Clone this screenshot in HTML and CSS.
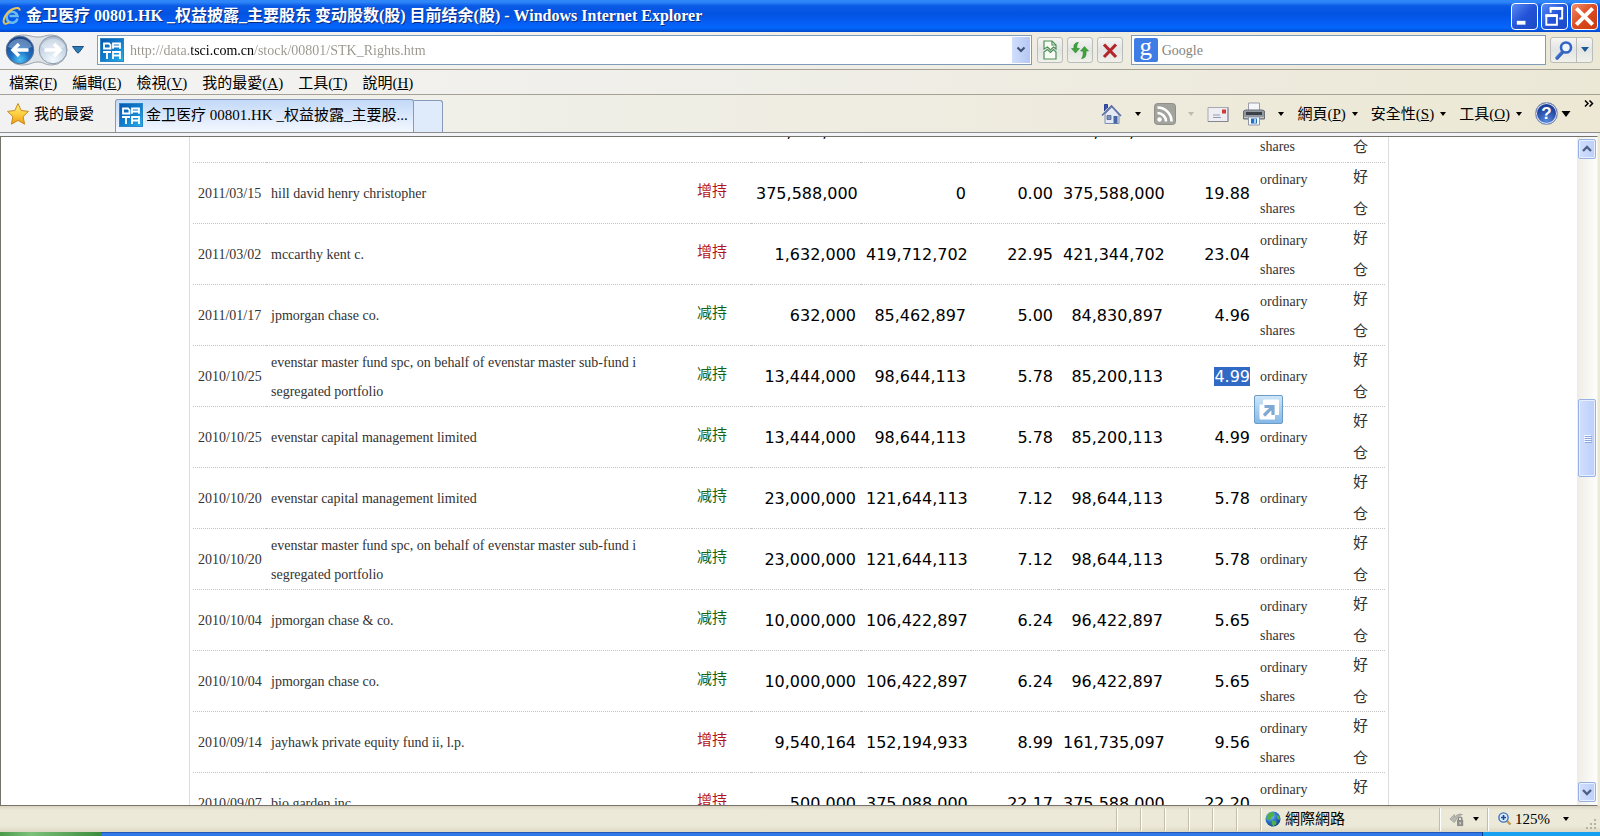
FILE: index.html
```html
<!DOCTYPE html>
<html lang="zh-Hant">
<head>
<meta charset="utf-8">
<title>金卫医疗 00801.HK _权益披露_主要股东 变动股数(股) 目前结余(股)</title>
<link rel="stylesheet" href="styles.css">
</head>
<body>
<svg class="defs" aria-hidden="true">
  <defs>
    <linearGradient id="favBg" x1="0" y1="0" x2="1" y2="1"><stop offset="0" stop-color="#0a57ac"/><stop offset=".55" stop-color="#1180cf"/><stop offset="1" stop-color="#25b4ea"/></linearGradient>
    <radialGradient id="backBg" cx=".5" cy=".85" r=".85"><stop offset="0" stop-color="#4fc4f5"/><stop offset=".4" stop-color="#1f6fc4"/><stop offset="1" stop-color="#173f84"/></radialGradient>
    <radialGradient id="fwdBg" cx=".5" cy=".85" r=".85"><stop offset="0" stop-color="#f4f9fd"/><stop offset=".6" stop-color="#c9d8e8"/><stop offset="1" stop-color="#a9b9cd"/></radialGradient>
    <linearGradient id="starBg" x1="0" y1="0" x2="0" y2="1"><stop offset="0" stop-color="#fff08a"/><stop offset=".5" stop-color="#fcd040"/><stop offset="1" stop-color="#f09a12"/></linearGradient>
    <radialGradient id="globeBg" cx=".35" cy=".3" r=".8"><stop offset="0" stop-color="#8fd0fa"/><stop offset=".5" stop-color="#2a72cc"/><stop offset="1" stop-color="#123c86"/></radialGradient>
    <linearGradient id="lensHandle" x1="0" y1="0" x2="1" y2="1"><stop offset="0" stop-color="#5c94ec"/><stop offset="1" stop-color="#1c3f9c"/></linearGradient>
    <symbol id="fav" viewBox="0 0 24 24">
      <rect x=".5" y=".5" width="23" height="23" fill="url(#favBg)" stroke="#2a86c4"/>
      <path d="M4 5.500h5l1.500 1.500v3.500H4zM13 10.800V5.500h7v5.300M13 8.500h7M3 14h8M7 14v7M13 21v-7h7v7M13 17.500h7" fill="none" stroke="#fff" stroke-width="1.800"/>
    </symbol>
    <symbol id="caret" viewBox="0 0 6 4"><path d="M0 0h6L3 4z"/></symbol>
  </defs>
</svg>

<header class="titlebar">
  <svg class="ie" viewBox="0 0 20 20" aria-hidden="true">
    <path d="M15.500 12.500A5.500 5.500 0 1 1 15.500 10H7.500" fill="none" stroke="#6cbcf4" stroke-width="2.600"/>
    <path d="M2.500 17.500C-.5 14 5 5.500 11 3c4-1.800 7-1.500 6.500 1.500" fill="none" stroke="#e8c45a" stroke-width="2"/>
    <path d="M2.500 17.500c1 .8 3 0 5-1.200" fill="none" stroke="#e8c45a" stroke-width="1.800"/>
  </svg>
  <h1 class="title">金卫医疗 00801.HK _权益披露_主要股东 变动股数(股) 目前结余(股) - Windows Internet Explorer</h1>
  <div class="winbtns">
    <button class="win" aria-label="最小化"><svg viewBox="0 0 26 26"><path d="M5 19.500h9" stroke="#fff" stroke-width="4"/></svg></button>
    <button class="win" aria-label="還原"><svg viewBox="0 0 26 26" fill="none" stroke="#fff"><path d="M9 9V5h12v10h-3" stroke-width="2"/><path d="M8 4.500h14" stroke-width="3"/><path d="M4.500 12.500h11v9h-11z" stroke-width="2"/><path d="M3.500 12h13" stroke-width="3"/></svg></button>
    <button class="win close" aria-label="關閉"><svg viewBox="0 0 26 26"><path d="M4.500 4.500l17 17M21.500 4.500l-17 17" stroke="#fff" stroke-width="4"/></svg></button>
  </div>
</header>

<div class="navbar">
  <div class="travel">
    <svg class="shell" viewBox="0 0 60 32" aria-hidden="true"><path d="M15.500 1C25 1 25 3 32 3s6-2 14-2a15 15 0 0 1 0 30c-8 0-8-3-14-3s-7 3-16.500 3a15 15 0 0 1 0-30z" fill="#dfe3e7" stroke="#9aa3ad"/></svg>
    <button class="travelbtn" aria-label="上一頁"><svg viewBox="0 0 30 30"><circle cx="15" cy="15" r="13.800" fill="url(#backBg)" stroke="#5b7290" stroke-width="1"/><path d="M3 12a12.500 11.500 0 0 1 24 0q-12 5-24 0z" fill="#fff" opacity=".3"/><path d="M23.500 15H8.500M14 9l-6 6 6 6" fill="none" stroke="#fff" stroke-width="3.400"/></svg></button>
    <button class="travelbtn" aria-label="下一頁"><svg viewBox="0 0 30 30"><circle cx="15" cy="15" r="13.800" fill="url(#fwdBg)" stroke="#8b99a8" stroke-width="1"/><path d="M3 12a12.500 11.500 0 0 1 24 0q-12 5-24 0z" fill="#fff" opacity=".35"/><path d="M6.500 15h15M16 9l6 6-6 6" fill="none" stroke="#fff" stroke-width="3.400"/></svg></button>
  </div>
  <button class="recent" aria-label="最近的網頁"><svg viewBox="0 0 12 8"><path d="M.5.5h11L7 6.500q-1 1-2 0z" fill="#2c7cb5" stroke="#1d4f80"/></svg></button>
  <div class="box address">
    <svg class="fav"><use href="#fav"/></svg>
    <input class="url" type="text" aria-label="網址" value="http://data.tsci.com.cn/stock/00801/STK_Rights.htm">
    <button class="drop" aria-label="顯示網址清單"><svg viewBox="0 0 10 8"><path d="M1.500 1.500L5 5l3.500-3.500" fill="none" stroke="#3c4f74" stroke-width="2"/></svg></button>
  </div>
  <div class="tools">
    <button class="tool" aria-label="相容性檢視"><svg viewBox="0 0 24 24" fill="#f6fbf4" stroke="#4e8f58" stroke-width="1.200"><path d="M6 11V3h8l4 4v4l-2.500-2-3 3-3-3z"/><path d="M14 3v4h4" fill="none"/><path d="M6 14l3.500-2.500 3 3 3-3L18 14v7H6z"/></svg></button>
    <button class="tool" aria-label="重新整理"><svg viewBox="0 0 24 24"><path d="M10.500 4.500C6.500 4.500 5.500 7 6 10.500H3.500l4 4.500 4-4.500H9c-.3-3 0-4.500 1.500-6z" fill="#3fa43a" stroke="#1f7a24" stroke-width=".5"/><path d="M13.500 20.500c4 0 5-3 4.500-7.500h2.500l-4-4.500-4 4.500H15c.3 3 .2 5.500-1.500 7.500z" fill="#3fa43a" stroke="#1f7a24" stroke-width=".5"/></svg></button>
    <button class="tool" aria-label="停止"><svg viewBox="0 0 24 24"><path d="M6 6.500l12 12.500M18 6.500L6 19" stroke="#b3262b" stroke-width="3.200"/></svg></button>
  </div>
  <div class="box search">
    <span class="google" aria-hidden="true">g</span>
    <input class="query" type="text" aria-label="搜尋" placeholder="Google">
  </div>
  <div class="searchbtns">
    <button class="go" aria-label="搜尋"><svg viewBox="0 0 24 24" fill="none"><path d="M11 13.500l-6 6.500" stroke="url(#lensHandle)" stroke-width="3.600" stroke-linecap="round"/><circle cx="14" cy="9.500" r="5" fill="#eef5fd" stroke="#3464c4" stroke-width="2.600"/></svg></button>
    <button class="more" aria-label="搜尋選項"><svg viewBox="0 0 8 5"><path d="M0 0h8L4 5z" fill="#1c5a96"/></svg></button>
  </div>
</div>

<nav class="menubar">
  <button>檔案(<u>F</u>)</button><button>編輯(<u>E</u>)</button><button>檢視(<u>V</u>)</button><button>我的最愛(<u>A</u>)</button><button>工具(<u>T</u>)</button><button>說明(<u>H</u>)</button>
</nav>

<div class="tabrow">
  <button class="favorites"><svg viewBox="0 0 24 24"><path d="M12 1.500l3.200 7 7.300.9-5.400 5.200 1.500 7.600L12 18.400l-6.600 3.800 1.500-7.600L1.500 9.400l7.300-.9z" fill="url(#starBg)" stroke="#c98a1c"/></svg>我的最愛</button>
  <button class="tab"><svg class="fav"><use href="#fav"/></svg><span>金卫医疗 00801.HK _权益披露_主要股...</span></button>
  <button class="newtab" aria-label="開新索引標籤"></button>
  <div class="commands">
    <button class="cmd wide" aria-label="首頁"><svg class="i22" viewBox="0 0 22 22"><path d="M4 11l7-7 7 8v8.500H4z" fill="#e4e9f4" stroke="#7f8fae"/><path d="M1 12.500L10.500 3 20 13" fill="none" stroke="#5a70a8" stroke-width="1.600"/><path d="M3.500 8V1.500h3V5" fill="#3c54b4" stroke="#2c3f94"/><path d="M12.500 13h4v7.500h-4z" fill="#4766a6"/><path d="M6 12.500h4v4H6z" fill="#7c93bd" stroke="#445a88" stroke-width=".7"/></svg><svg class="caret"><use href="#caret"/></svg></button>
    <button class="cmd wide" aria-label="摘要" disabled><svg class="i22" viewBox="0 0 22 22"><rect x=".5" y=".5" width="21" height="21" rx="3" fill="#a3a39e" stroke="#8f8f8a"/><circle cx="5.500" cy="16.500" r="2.200" fill="#fff"/><path d="M3.500 10a8.500 8.500 0 0 1 8.500 8.500M3.500 4.500a14 14 0 0 1 14 14" fill="none" stroke="#fff" stroke-width="2.600"/></svg><svg class="caret faint"><use href="#caret"/></svg></button>
    <button class="cmd" aria-label="讀取郵件"><svg class="i22" viewBox="0 0 22 22"><path d="M1 4.500h20v14H1z" fill="#eeeef2" stroke="#a9a9b4"/><path d="M1 18.500h20V4.500" fill="none" stroke="#858592"/><path d="M15 6.500h4v4h-4z" fill="#cf3b3b"/><path d="M6 12h7M6 14.500h8" stroke="#8f98b4" stroke-width="1.200"/></svg></button>
    <button class="cmd wide" aria-label="列印"><svg class="i24" viewBox="0 0 24 24"><path d="M6.500 1h11v9h-11z" fill="#f4f6fa" stroke="#9a9da6"/><path d="M1.500 9l2-1h17l2 1v8h-21z" fill="#9298a0" stroke="#6c7078"/><path d="M4 11.500h16" stroke="#3c4048" stroke-width="3"/><path d="M2 15.500h20" stroke="#c5c9cf"/><path d="M6.500 15h11v8h-11z" fill="#f3f8fd" stroke="#8d98a8"/><path d="M9 16.500h6v5H9z" fill="#2c6cbc"/><path d="M12 17h2v4h-2z" fill="#9fdcf2"/></svg><svg class="caret"><use href="#caret"/></svg></button>
    <button class="cmd"><span>網頁(<u>P</u>)</span><svg class="caret"><use href="#caret"/></svg></button>
    <button class="cmd"><span>安全性(<u>S</u>)</span><svg class="caret"><use href="#caret"/></svg></button>
    <button class="cmd"><span>工具(<u>O</u>)</span><svg class="caret"><use href="#caret"/></svg></button>
    <button class="cmd help" aria-label="說明"><span class="q">?</span><svg class="caret big"><use href="#caret"/></svg></button>
    <button class="overflow" aria-label="更多"><svg viewBox="0 0 10 7"><path d="M1 .5l3 3-3 3M5.500 .5l3 3-3 3" fill="none" stroke="#000" stroke-width="1.500"/></svg></button>
  </div>
</div>

<div class="view">
  <main class="page">
    <div class="sheet">
      <table class="rights">
        <colgroup><col class="c-date"><col class="c-name"><col class="c-type"><col class="c-num"><col class="c-num"><col class="c-pct"><col class="c-num"><col class="c-pct"><col class="c-class"><col class="c-pos"></colgroup>
        <tbody>
          <tr><td></td><td></td><td></td><td class="n">375,588,000</td><td></td><td></td><td class="n">375,588,000</td><td></td><td>ordinary shares</td><td><span class="pos"><span>好</span><span>仓</span></span></td></tr>
          <tr><td>2011/03/15</td><td>hill david henry christopher</td><td class="up">增持</td><td class="n">375,588,000</td><td class="n">0</td><td class="n">0.00</td><td class="n">375,588,000</td><td class="n">19.88</td><td>ordinary shares</td><td><span class="pos"><span>好</span><span>仓</span></span></td></tr>
          <tr><td>2011/03/02</td><td>mccarthy kent c.</td><td class="up">增持</td><td class="n">1,632,000</td><td class="n">419,712,702</td><td class="n">22.95</td><td class="n">421,344,702</td><td class="n">23.04</td><td>ordinary shares</td><td><span class="pos"><span>好</span><span>仓</span></span></td></tr>
          <tr><td>2011/01/17</td><td>jpmorgan chase co.</td><td class="down">减持</td><td class="n">632,000</td><td class="n">85,462,897</td><td class="n">5.00</td><td class="n">84,830,897</td><td class="n">4.96</td><td>ordinary shares</td><td><span class="pos"><span>好</span><span>仓</span></span></td></tr>
          <tr><td>2010/10/25</td><td>evenstar master fund spc, on behalf of evenstar master sub-fund i segregated portfolio</td><td class="down">减持</td><td class="n">13,444,000</td><td class="n">98,644,113</td><td class="n">5.78</td><td class="n">85,200,113</td><td class="n picked"><mark>4.99</mark><button class="accel" aria-label="加速器"><svg viewBox="0 0 29 29"><path d="M5.500 23V9.500H9V5.500q0-1 1-1h14q1 0 1 1V20h-4v4.500H7q-1.500 0-1.500-1.500z" fill="#fff"/><path d="M10 20.500l7.500-7.500M10.500 11.500h8.500V20" fill="none" stroke="#7fa9d2" stroke-width="3.200"/></svg></button></td><td>ordinary</td><td><span class="pos"><span>好</span><span>仓</span></span></td></tr>
          <tr><td>2010/10/25</td><td>evenstar capital management limited</td><td class="down">减持</td><td class="n">13,444,000</td><td class="n">98,644,113</td><td class="n">5.78</td><td class="n">85,200,113</td><td class="n">4.99</td><td>ordinary</td><td><span class="pos"><span>好</span><span>仓</span></span></td></tr>
          <tr><td>2010/10/20</td><td>evenstar capital management limited</td><td class="down">减持</td><td class="n">23,000,000</td><td class="n">121,644,113</td><td class="n">7.12</td><td class="n">98,644,113</td><td class="n">5.78</td><td>ordinary</td><td><span class="pos"><span>好</span><span>仓</span></span></td></tr>
          <tr><td>2010/10/20</td><td>evenstar master fund spc, on behalf of evenstar master sub-fund i segregated portfolio</td><td class="down">减持</td><td class="n">23,000,000</td><td class="n">121,644,113</td><td class="n">7.12</td><td class="n">98,644,113</td><td class="n">5.78</td><td>ordinary</td><td><span class="pos"><span>好</span><span>仓</span></span></td></tr>
          <tr><td>2010/10/04</td><td>jpmorgan chase &amp; co.</td><td class="down">减持</td><td class="n">10,000,000</td><td class="n">106,422,897</td><td class="n">6.24</td><td class="n">96,422,897</td><td class="n">5.65</td><td>ordinary shares</td><td><span class="pos"><span>好</span><span>仓</span></span></td></tr>
          <tr><td>2010/10/04</td><td>jpmorgan chase co.</td><td class="down">减持</td><td class="n">10,000,000</td><td class="n">106,422,897</td><td class="n">6.24</td><td class="n">96,422,897</td><td class="n">5.65</td><td>ordinary shares</td><td><span class="pos"><span>好</span><span>仓</span></span></td></tr>
          <tr><td>2010/09/14</td><td>jayhawk private equity fund ii, l.p.</td><td class="up">增持</td><td class="n">9,540,164</td><td class="n">152,194,933</td><td class="n">8.99</td><td class="n">161,735,097</td><td class="n">9.56</td><td>ordinary shares</td><td><span class="pos"><span>好</span><span>仓</span></span></td></tr>
          <tr><td>2010/09/07</td><td>bio garden inc.</td><td class="up">增持</td><td class="n">500,000</td><td class="n">375,088,000</td><td class="n">22.17</td><td class="n">375,588,000</td><td class="n">22.20</td><td>ordinary shares</td><td><span class="pos"><span>好</span><span>仓</span></span></td></tr>
        </tbody>
      </table>
    </div>
  </main>
  <div class="scroll">
    <button class="sbtn" aria-label="向上捲動"><svg viewBox="0 0 10 8"><path d="M1 6l4-4 4 4" fill="none" stroke="#4d6185" stroke-width="2.400"/></svg></button>
    <div class="before"></div>
    <div class="thumb"><i></i><i></i><i></i><i></i></div>
    <div class="after"></div>
    <button class="sbtn" aria-label="向下捲動"><svg viewBox="0 0 10 8"><path d="M1 2l4 4 4-4" fill="none" stroke="#4d6185" stroke-width="2.400"/></svg></button>
  </div>
</div>

<footer class="status">
  <div class="cell"></div><div class="cell"></div><div class="cell"></div><div class="cell"></div><div class="cell"></div><div class="cell"></div>
  <div class="cell zone"><svg class="i16" viewBox="0 0 16 16"><circle cx="8" cy="8" r="7.500" fill="url(#globeBg)"/><path d="M2 4q3-3.500 6-3l1.500 3-3 2.500L5 9.500 1.500 8zM7 9.500l4 .5.500 3-3 2.300-2-2zM11.500 4l3 1 .500 4-2.500-1z" fill="#4fb04a"/></svg>網際網路</div>
  <button class="cell protect" aria-label="受保護模式"><svg class="i16" viewBox="0 0 18 18"><path d="M1 9l5-5v3q5-5 9-3l-3 1q-3 1-4 5l-2 3z" fill="#b9b9b4" stroke="#8e8e89" stroke-width=".7"/><path d="M9 10h7v7H9z" fill="#8f8f8c"/><path d="M10.500 10V8q2-2.500 4 0v2" fill="none" stroke="#777" stroke-width="1.300"/><path d="M12.500 12.500v2.500" stroke="#fff"/></svg><svg class="caret"><use href="#caret"/></svg></button>
  <button class="cell zoom"><svg class="i14" viewBox="0 0 14 14"><path d="M8 8l4.500 4.500" stroke="#c09a50" stroke-width="2.400"/><circle cx="5.500" cy="5.500" r="4.600" fill="#dcecfc" stroke="#3c72c0" stroke-width="1.400"/><path d="M5.500 3v5M3 5.500h5" stroke="#1c48a0" stroke-width="1.600"/></svg>125%<svg class="caret"><use href="#caret"/></svg></button>
  <svg class="grip" viewBox="0 0 12 12" fill="#b5b29f"><path d="M9 0h2v2H9zM9 4h2v2H9zM9 8h2v2H9zM5 4h2v2H5zM5 8h2v2H5zM1 8h2v2H1z"/></svg>
</footer>
<div class="taskbar"><div class="start"></div><div class="tasks"></div><div class="tray"></div></div>
</body>
</html>
```
FILE: styles.css
```css
* { box-sizing: border-box; }
body {
  margin: 0;
  height: 100vh;
  display: flex;
  flex-direction: column;
  overflow: hidden;
  background: #ece9d8;
  color: #000;
  font: 15px/20px "Liberation Serif", "Noto Sans CJK TC", serif;
}
button {
  display: flex;
  align-items: center;
  justify-content: center;
  margin: 0;
  padding: 0;
  border: 0;
  background: none;
  color: inherit;
  font: inherit;
  white-space: nowrap;
}
input { border: 0; outline: 0; padding: 0; background: none; font: inherit; }
svg { display: block; flex: none; }
.defs { position: absolute; width: 0; height: 0; }

.titlebar {
  flex: none;
  display: flex;
  align-items: center;
  height: 32px;
  padding: 0 2px 0 2px;
  background: linear-gradient(#2f86f8 0, #2f86f8 2px, #0a5ae6 6px, #0353e2 14px, #0560f6 24px, #0466fc 28px, #0249cc 32px);
}
.ie { width: 20px; height: 20px; }
.title {
  flex: 1;
  margin: 0 0 0 4px;
  overflow: hidden;
  color: #fff;
  font: bold 16px/24px "Liberation Serif", "Noto Sans CJK SC", serif;
  text-shadow: 1px 1px 0 #0a2c80;
  white-space: nowrap;
}
.winbtns { display: flex; gap: 3px; }
.win {
  width: 27px;
  height: 27px;
  border: 1px solid #fff;
  border-radius: 4px;
  background: linear-gradient(135deg, #5a8cf4, #2353d8 50%, #1c49c4);
}
.win.close { background: linear-gradient(135deg, #f0906c, #dc4a20 50%, #c83c10); }
.win svg { width: 25px; height: 25px; }

.navbar {
  flex: none;
  display: flex;
  align-items: center;
  height: 38px;
  padding: 0 7px 2px 4px;
  border-bottom: 1px solid #a5a295;
  background: linear-gradient(90deg, #f3f4f6, #f0efea 40%, #ece8d6);
}
.travel { position: relative; display: flex; gap: 2px; width: 64px; }
.shell { position: absolute; left: 0; top: -1px; width: 64px; height: 32px; }
.travelbtn { position: relative; width: 31px; height: 30px; }
.travelbtn svg { width: 30px; height: 30px; }
.recent { width: 20px; margin-right: 9px; }
.recent svg { width: 12px; height: 8px; }
.box {
  display: flex;
  align-items: center;
  height: 30px;
  border: 1px solid #7f9db9;
  background: #fff;
}
.address { flex: 938; padding: 0 1px 0 2px; }
.fav { width: 24px; height: 24px; }
.url {
  flex: 1;
  min-width: 0;
  height: 24px;
  margin-left: 6px;
  padding-top: 2px;
  font-size: 14px;
  background: linear-gradient(90deg, #98968c 0, #98968c 61px, #000 61px, #000 124px, #98968c 124px);
  background-clip: text;
  color: transparent;
}
.drop {
  width: 18px;
  height: 26px;
  background: linear-gradient(90deg, #d0defc, #b4c8f4);
}
.drop svg { width: 10px; height: 8px; }
.tools { display: flex; gap: 4px; margin: 0 8px 0 5px; }
.tool, .searchbtns {
  border: 1px solid #b9bcb8;
  border-radius: 3px;
  background: linear-gradient(#f6f6f2, #e2e5e4 50%, #f1f1ea);
}
.tool { width: 26px; height: 26px; }
.tool svg { width: 24px; height: 24px; }
.search { flex: 415; padding-left: 2px; }
.google {
  width: 24px;
  height: 24px;
  border-radius: 2px;
  background: #3f7de6;
  color: #fff;
  font: 25px/18px "Liberation Serif", serif;
  text-align: center;
}
.query { flex: 1; min-width: 0; height: 24px; margin-left: 4px; padding-top: 2px; font-size: 14px; }
.query::placeholder { color: #85847c; opacity: 1; }
.searchbtns { display: flex; height: 26px; margin-left: 4px; }
.go { width: 25px; }
.go svg { width: 24px; height: 24px; }
.more { width: 16px; border-left: 1px solid #b9bcb8; }
.more svg { width: 8px; height: 5px; }

.menubar {
  flex: none;
  display: flex;
  gap: 15px;
  height: 25px;
  padding: 2px 9px 0;
  border-bottom: 1px solid #a5a295;
  background: linear-gradient(90deg, #f3f3f3, #f0efea 40%, #ece8d6);
}

.tabrow {
  flex: none;
  display: flex;
  height: 38px;
  border-bottom: 1px solid #8d8f8e;
  background: linear-gradient(90deg, #f2f2f2, #f0efe8 30%, #ece8d4);
}
.favorites { width: 115px; padding: 0 20px 0 6px; gap: 4px; justify-content: flex-start; }
.favorites svg { width: 24px; height: 24px; }
.tab {
  width: 299px;
  margin-top: 4px;
  padding: 0 0 2px 3px;
  gap: 3px;
  border: 1px solid #8799b8;
  border-bottom: 0;
  border-radius: 3px 3px 0 0;
  background: linear-gradient(#c2d9f8, #dbe8fb 50%, #f4f8fe);
  justify-content: flex-start;
}
.tab span { font-family: "Liberation Serif", "Noto Sans CJK SC", serif; }
.newtab {
  width: 29px;
  margin-top: 5px;
  border: 1px solid #8799b8;
  border-left: 0;
  border-bottom: 0;
  border-radius: 0 3px 0 0;
  background: #dfeafa;
}
.commands { flex: 1; display: flex; justify-content: flex-end; gap: 13px; padding-right: 6px; }
.cmd { gap: 6px; }
.cmd.wide { gap: 12px; }
.cmd.help { gap: 3px; }
.caret { width: 6px; height: 4px; }
.caret.big { width: 10px; height: 6px; }
.caret.faint { opacity: .2; }
.i22 { width: 22px; height: 22px; }
.i24 { width: 24px; height: 24px; }
.i16 { width: 16px; height: 16px; }
.i14 { width: 14px; height: 14px; }
.q {
  width: 23px;
  height: 23px;
  border: 1px solid #8390b4;
  border-radius: 50%;
  background: radial-gradient(circle at 50% 90%, #5a8ce0, #2347a0 60%, #1c3784);
  box-shadow: inset 0 0 0 1px #dfe6f4;
  color: #fff;
  font: bold 17px/21px "Liberation Sans", sans-serif;
}
.overflow { align-items: flex-start; padding-top: 5px; }
.overflow svg { width: 10px; height: 7px; }

.view {
  flex: 1;
  min-height: 0;
  display: flex;
  margin: 3px 2px 0 0;
  border: 1px solid #74746c;
  border-right-color: #f4f2e8;
  box-shadow: 0 -3px 0 #f2f4f8;
  background: #fff;
}
.page { flex: 1; overflow: hidden; }
.sheet {
  width: 1200px;
  max-width: 100%;
  margin: -36px auto 0;
  padding: 0 3px;
  border: solid #dcdcdc;
  border-width: 0 1px;
}
.rights {
  width: 100%;
  border-collapse: collapse;
  table-layout: fixed;
  color: #333;
  font: 14px/29px "Liberation Serif", "Noto Sans CJK SC", serif;
}
.rights td { height: 61px; padding: 2px 5px 0; border-bottom: 1px dotted #c4c4c4; }
.rights td:last-child { padding-top: 0; }
.c-date { width: 73px; }
.c-type { width: 59px; }
.c-num { width: 110px; }
.c-pct { width: 87px; }
.c-class { width: 93px; }
.c-pos { width: 37px; }
.rights .n { color: #000; font: 16px/20px "DejaVu Sans", sans-serif; text-align: right; }
.rights .up, .rights .down { padding-bottom: 4px; font-size: 15px; }
.rights .up { color: #b4141e; }
.rights .down { color: #146414; }
.pos { display: grid; gap: 12px; font-size: 15px; line-height: 20px; }
.picked { position: relative; }
.picked mark { background: #316ac5; color: #fff; }
.accel {
  position: absolute;
  top: 49px;
  right: -28px;
  z-index: 1;
  width: 29px;
  height: 29px;
  border: 1px solid #6c9cc8;
  border-radius: 2px;
  background: linear-gradient(#cfe6f8, #84b8e6);
}
.accel svg { width: 29px; height: 29px; }

.scroll {
  flex: none;
  display: flex;
  flex-direction: column;
  width: 20px;
  padding: 2px 1px 3px;
  background: linear-gradient(90deg, #eeede5, #fdfdfb);
}
.sbtn, .thumb {
  flex: none;
  border: 1px solid #98b1e4;
  border-radius: 2px;
  background: linear-gradient(90deg, #d2dffd, #bccffa);
  box-shadow: inset 0 0 0 1px #e8effe;
}
.sbtn { height: 20px; }
.sbtn svg { width: 10px; height: 8px; }
.before { flex: 241; }
.after { flex: 306; }
.thumb {
  height: 78px;
  display: flex;
  flex-direction: column;
  align-items: center;
  justify-content: center;
  gap: 1px;
}
.thumb i { width: 7px; height: 1px; background: #f4f8ff; box-shadow: 1px 1px 0 #8ca8e0; }

.status {
  flex: none;
  display: flex;
  align-items: center;
  justify-content: flex-end;
  height: 26px;
  padding: 1px 3px 1px 0;
  background: linear-gradient(#d8d4c0, #ece9d8 4px, #ece9d8 20px, #dcd8c4);
}
.cell { width: 24px; height: 23px; border-left: 1px solid #c2bea9; box-shadow: inset 1px 0 0 #fff; }
.cell.zone { display: flex; align-items: center; gap: 4px; width: 179px; padding-left: 4px; }
.cell.protect { width: 48px; gap: 8px; }
.cell.zoom { width: 98px; gap: 3px; padding-left: 10px; justify-content: flex-start; }
.zoom .caret { margin-left: 10px; }
.grip { width: 12px; height: 12px; align-self: flex-end; }

.taskbar { flex: none; display: flex; height: 4px; background: #2f78e8; }
.start { width: 101px; background: linear-gradient(90deg, #4a9a4a, #7cc07a 30%, #3c8c3c); }
.tasks { flex: 1; border-top: 1px solid #2458b8; }
.tray { width: 118px; border-left: 1px solid #0c3c90; background: #18a0f0; }
```
